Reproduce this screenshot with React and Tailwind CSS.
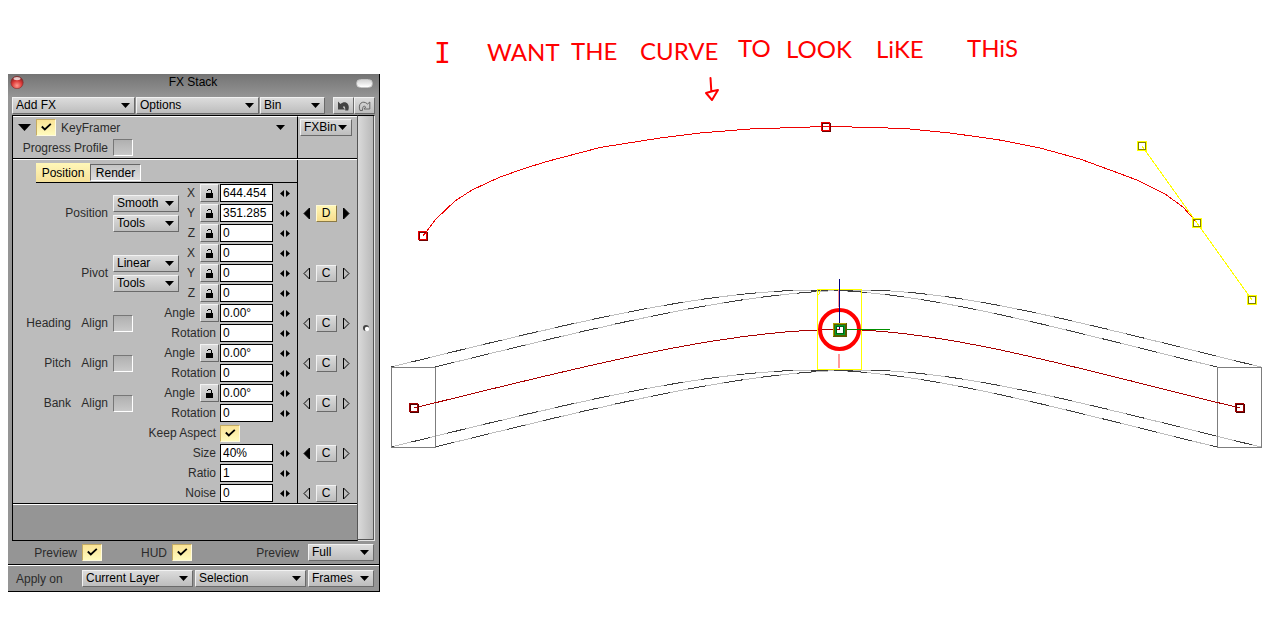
import React from "react";

const raised =
  "border border-t-[#f2f2f2] border-l-[#f2f2f2] border-r-[#6a6a6a] border-b-[#6a6a6a] bg-linear-to-b from-[#dcdcdc] to-[#bdbdbd]";

function Picker({ label, options, className = "" }) {
  return (
    <span className={`relative block h-[17px] ${className}`}>
      <select
        aria-label={label}
        className={`block h-full w-full appearance-none rounded-none ${raised} pl-[3px] text-[12px] leading-[15px] text-black outline-none`}
      >
        {options.map((o) => (
          <option key={o}>{o}</option>
        ))}
      </select>
      <svg
        className="pointer-events-none absolute top-[6px] right-[5px] h-[5px] w-[9px]"
        viewBox="0 0 9 5"
        aria-hidden="true"
      >
        <path d="M0 0h9L4.500 5z" fill="#000" />
      </svg>
    </span>
  );
}

function Tick({ id, checked = false }) {
  return (
    <span className="relative block h-[17px] w-[20px] shrink-0">
      <input
        id={id}
        type="checkbox"
        defaultChecked={checked}
        className="peer block h-full w-full appearance-none border border-t-[#777] border-l-[#777] border-r-white border-b-white bg-linear-to-b from-[#b0b0b0] to-[#c8c8c8] checked:border-t-[#c4ab62] checked:border-l-[#c4ab62] checked:border-r-[#fffbe0] checked:border-b-[#fffbe0] checked:from-[#fae395] checked:to-[#fffbbd]"
      />
      <svg
        className="pointer-events-none invisible absolute top-[4px] left-[5px] h-[8px] w-[11px] peer-checked:visible"
        viewBox="0 0 11 8"
        aria-hidden="true"
      >
        <path d="M0.800 3.500l3 3L9.800 0.800" fill="none" stroke="#000" strokeWidth="1.800" />
      </svg>
    </span>
  );
}

function Lock({ label }) {
  return (
    <button type="button" aria-label={`Lock ${label}`} className={`flex h-[18px] w-[19px] items-center justify-center ${raised}`}>
      <svg width="9" height="9" viewBox="0 0 9 9" shapeRendering="crispEdges" aria-hidden="true">
        <path d="M1 4h7v5H1z" fill="#000" />
        <path d="M2 1h1V0h3v1h1v3H6V1H3v1H2z" fill="#000" />
      </svg>
    </button>
  );
}

function Stepper({ label }) {
  return (
    <button type="button" aria-label={`Adjust ${label}`} className="ml-[7px] flex h-[18px] w-[10px] items-center">
      <svg width="10" height="7" viewBox="0 0 10 7" aria-hidden="true">
        <path d="M4 0v7L0 3.500zM6 0v7l4-3.500z" fill="#000" />
      </svg>
    </button>
  );
}

function Field({ group, label, value, lock }) {
  const name = `${group} ${label}`;
  const id = name.toLowerCase().replace(/ /g, "-");
  return (
    <div className="flex h-[20px] items-center justify-end pr-[7px]">
      <label htmlFor={id} className={lock ? "mr-[5px]" : "mr-[4px]"}>
        {label}
      </label>
      {lock && <Lock label={name} />}
      <input
        id={id}
        defaultValue={value}
        className={`h-[18px] w-[53px] border border-black bg-white pl-[2px] text-[12px] text-black outline-none ${lock ? "ml-px" : ""}`}
      />
      <Stepper label={name} />
    </div>
  );
}

function Nav({ dir, solid, label }) {
  return (
    <button type="button" aria-label={label} className="flex h-[14px] w-[8px] items-center">
      <svg width="8" height="13" viewBox="0 0 8 13" aria-hidden="true">
        <path
          d={dir === "left" ? "M6.500 1v11L1 6.500z" : "M1.500 1v11L7 6.500z"}
          fill={solid ? "#000" : "none"}
          stroke="#000"
        />
      </svg>
    </button>
  );
}

function Keys({ name, letter = "C", left, right, active }) {
  return (
    <div className="flex w-full items-center justify-center gap-[5px] pr-[3px]">
      <Nav dir="left" solid={left} label={`Previous ${name} key`} />
      <button
        type="button"
        className={
          active
            ? "h-[17px] w-[21px] border border-t-[#fffbd5] border-l-[#fffbd5] border-r-[#8b7a45] border-b-[#8b7a45] bg-linear-to-b from-[#fff6b4] to-[#f7dd8c] text-[12px] leading-[15px] text-black"
            : `h-[17px] w-[21px] ${raised} text-[12px] leading-[15px] text-black`
        }
      >
        {letter}
      </button>
      <Nav dir="right" solid={right} label={`Next ${name} key`} />
    </div>
  );
}

function Group({ left, children, keys }) {
  return (
    <div className="flex">
      <div className="flex flex-1 items-center">
        {left}
        <div className="flex-1">{children}</div>
      </div>
      <div className="flex w-[60px] items-center border-l border-black">{keys}</div>
    </div>
  );
}

function Interp({ name, mode }) {
  return (
    <div className="flex items-center">
      <span className="w-[95px] text-right">{name}</span>
      <div className="ml-[5px] flex flex-col gap-[3px]">
        <Picker label={`${name} interpolation`} options={[mode]} className="w-[66px]" />
        <Picker label={`${name} tools`} options={["Tools"]} className="w-[66px]" />
      </div>
    </div>
  );
}

function AlignBox({ name }) {
  const id = `align-${name.toLowerCase()}`;
  return (
    <div className="flex items-center">
      <span className="w-[58px] text-right">{name}</span>
      <label htmlFor={id} className="mr-[5px] w-[37px] text-right">
        Align
      </label>
      <Tick id={id} />
    </div>
  );
}

function Panel() {
  return (
    <section className="w-[372px] shrink-0 border-r border-b border-black bg-[#959595] text-[12px] leading-[16px] text-[#2b2b2b]">
      <header className="flex h-[23px] items-start justify-between bg-linear-to-b from-[#747474] to-[#959595] px-[2px]">
        <button type="button" aria-label="Close" className="mt-[1px]">
          <svg width="14" height="14" viewBox="0 0 14 14" aria-hidden="true">
            <defs>
              <radialGradient id="close" cx="50%" cy="75%" r="65%">
                <stop offset="0" stopColor="#ff9c90" />
                <stop offset="0.6" stopColor="#dc3a38" />
                <stop offset="1" stopColor="#8e2525" />
              </radialGradient>
            </defs>
            <circle cx="7" cy="7.500" r="6.200" fill="url(#close)" stroke="#7a3030" strokeWidth="0.600" />
            <ellipse cx="7" cy="3.600" rx="3.500" ry="1.700" fill="#fff" opacity="0.750" />
          </svg>
        </button>
        <h1 className="ml-[6px] text-[12px] text-black">FX Stack</h1>
        <button
          type="button"
          aria-label="Collapse"
          className="mt-[5px] mr-[4px] h-[9px] w-[17px] rounded-full border border-[#c4c4c4] bg-linear-to-b from-[#d4d4d4] to-white"
        />
      </header>

      <div className="flex gap-px px-[4px]">
        <Picker label="Add FX" options={["Add FX"]} className="w-[123px]" />
        <Picker label="Options" options={["Options"]} className="w-[123px]" />
        <Picker label="Bin" options={["Bin"]} className="w-[65px]" />
        <div className="ml-[7px] flex">
          <button type="button" aria-label="Undo" className={`flex h-[17px] w-[21px] items-center justify-center ${raised}`}>
            <svg width="13" height="10" viewBox="0 0 13 10" aria-hidden="true">
              <path d="M1 0.500v8h7L5.800 6C7 4.300 8.500 5 8.200 9.500h3C13.500 3 8.500 -1.500 3.400 3z" fill="#444" />
            </svg>
          </button>
          <button type="button" aria-label="Redo" className={`flex h-[17px] w-[21px] items-center justify-center ${raised}`}>
            <svg width="13" height="10" viewBox="0 0 13 10" aria-hidden="true">
              <path
                d="M11.800 1v7H6L7.700 6C6 4.300 4.500 5 4.500 9.500H2C-0.500 3 4.500 -1.500 9.600 3z"
                fill="none"
                stroke="#666"
              />
            </svg>
          </button>
        </div>
      </div>

      <div className="mx-[4px] mt-px flex">
        <div className="flex flex-1 flex-col border border-black border-r-[#555]">
          <div className="flex h-[43px] border-b border-black bg-[#bcbcbc]">
            <div className="flex-1 border-t border-white">
              <div className="flex items-center pt-[2px]">
                <button type="button" aria-label="Fold KeyFramer" className="ml-[5px] flex h-[17px] w-[13px] items-center">
                  <svg width="13" height="7" viewBox="0 0 13 7" aria-hidden="true">
                    <path d="M0 0h13L6.500 7z" fill="#000" />
                  </svg>
                </button>
                <span className="ml-[5px]">
                  <Tick id="keyframer" checked />
                </span>
                <label htmlFor="keyframer" className="ml-[5px] flex-1">
                  KeyFramer
                </label>
                <button type="button" aria-label="KeyFramer menu" className="mr-[12px] flex h-[17px] items-center">
                  <svg width="9" height="5" viewBox="0 0 9 5" aria-hidden="true">
                    <path d="M0 0h9L4.500 5z" fill="#000" />
                  </svg>
                </button>
              </div>
              <div className="mt-[3px] flex items-center">
                <label htmlFor="profile" className="w-[95px] text-right">
                  Progress Profile
                </label>
                <span className="ml-[5px]">
                  <Tick id="profile" />
                </span>
              </div>
            </div>
            <div className="w-[60px] border-t border-l border-t-white border-l-black pt-[2px] pl-[2px]">
              <Picker label="FXBin" options={["FXBin"]} className="w-[52px]" />
            </div>
          </div>

          <div className="border-t border-white bg-[#bcbcbc]">
            <Group keys={null}>
              <div className="pt-[3px] pl-[23px]">
                <div role="tablist" className="flex h-[20px] items-start border-b border-black">
                  <button
                    type="button"
                    role="tab"
                    aria-selected="true"
                    className="h-[19px] w-[54px] bg-linear-to-b from-[#fff7b8] to-[#f6e19a] text-black"
                  >
                    Position
                  </button>
                  <button
                    type="button"
                    role="tab"
                    aria-selected="false"
                    className="mt-px h-[17px] w-[51px] border border-t-[#666] border-l-[#666] border-r-white border-b-white bg-linear-to-b from-[#c4c4c4] to-[#dedede] leading-[17px] text-black"
                  >
                    Render
                  </button>
                </div>
              </div>
            </Group>
            <Group
              left={<Interp name="Position" mode="Smooth" />}
              keys={<Keys name="Position" letter="D" left right active />}
            >
              <Field group="Position" label="X" value="644.454" lock />
              <Field group="Position" label="Y" value="351.285" lock />
              <Field group="Position" label="Z" value="0" lock />
            </Group>
            <Group left={<Interp name="Pivot" mode="Linear" />} keys={<Keys name="Pivot" />}>
              <Field group="Pivot" label="X" value="0" lock />
              <Field group="Pivot" label="Y" value="0" lock />
              <Field group="Pivot" label="Z" value="0" lock />
            </Group>
            {["Heading", "Pitch", "Bank"].map((name) => (
              <Group key={name} left={<AlignBox name={name} />} keys={<Keys name={name} />}>
                <Field group={name} label="Angle" value="0.00°" lock />
                <Field group={name} label="Rotation" value="0" />
              </Group>
            ))}
            <Group keys={null}>
              <div className="flex h-[20px] items-center justify-end pr-[57px]">
                <label htmlFor="aspect" className="mr-[4px]">
                  Keep Aspect
                </label>
                <Tick id="aspect" checked />
              </div>
            </Group>
            <Group keys={<Keys name="Size" left />}>
              <Field group="Shape" label="Size" value="40%" />
            </Group>
            <Group keys={null}>
              <Field group="Shape" label="Ratio" value="1" />
            </Group>
            <Group keys={<Keys name="Noise" />}>
              <Field group="Shape" label="Noise" value="0" />
            </Group>
          </div>
          <div className="h-[37px] border-t border-black">
            <div className="border-t border-white" />
          </div>
        </div>
        <div className="w-[17px] border-t border-r border-b border-t-black border-r-[#e5e5e5] border-b-[#e5e5e5]">
          <div className="flex h-full items-center justify-center border-r border-b border-[#555] bg-linear-to-r from-[#dadada] to-[#b9b9b9]">
            <svg width="8" height="8" viewBox="0 0 8 8" aria-hidden="true">
              <circle cx="4" cy="4" r="3" fill="#444" />
              <circle cx="5" cy="5" r="2.200" fill="#fff" />
            </svg>
          </div>
        </div>
      </div>

      <div className="flex h-[24px] items-center border-b border-black pr-[5px]">
        <label htmlFor="preview" className="w-[69px] text-right">
          Preview
        </label>
        <span className="ml-[5px]">
          <Tick id="preview" checked />
        </span>
        <label htmlFor="hud" className="w-[65px] text-right">
          HUD
        </label>
        <span className="ml-[5px]">
          <Tick id="hud" checked />
        </span>
        <span className="flex-1 pr-[9px] text-right">Preview</span>
        <Picker label="Preview quality" options={["Full"]} className="w-[66px]" />
      </div>
      <div className="flex h-[26px] items-center border-t border-white pr-[5px]">
        <span className="flex-1 pl-[8px]">Apply on</span>
        <Picker label="Layer" options={["Current Layer"]} className="w-[111px]" />
        <Picker label="Range" options={["Selection"]} className="ml-[2px] w-[111px]" />
        <Picker label="Units" options={["Frames"]} className="ml-[2px] w-[66px]" />
      </div>
    </section>
  );
}

function Handle({ x, y, light, dark, inset }) {
  return (
    <g fill="none" shapeRendering="crispEdges">
      {inset ? (
        <rect x={x - 3.5} y={y - 3.5} width="7" height="7" stroke={dark} />
      ) : (
        <rect x={x - 3.5} y={y - 3.5} width="8" height="8" stroke={dark} />
      )}
      <rect x={x - 4.5} y={y - 4.5} width={inset ? 9 : 8} height={inset ? 9 : 8} stroke={light} />
    </g>
  );
}

const spine = "M414 408C570 370 720 329.500 839 329.500C950 329.500 1090 372 1240 408";
const rim = "M414 408C570 370 720 331 839 331C950 331 1090 372 1240 408";

const edges = [
  [-23, -41],
  [21, -41],
  [-23, 39],
  [21, 39],
];

const words = [
  { x: 487, y: 61, t: "WANT" },
  { x: 571, y: 60, t: "THE" },
  { x: 640, y: 60, t: "CURVE" },
  { x: 738, y: 57, t: "TO" },
  { x: 786, y: 58, t: "LOOK" },
  { x: 876, y: 58, t: "LiKE" },
  { x: 967, y: 57, t: "THiS" },
];

function Viewport() {
  return (
    <svg
      className="h-auto min-w-0 flex-1"
      viewBox="380 0 896 624"
      preserveAspectRatio="xMinYMin meet"
      role="img"
      aria-label="Motion path"
    >
      <g fill="#f00" className="font-['Lato',sans-serif] text-[24px]">
        <text x="434" y="63" className="font-['DejaVu_Sans_Mono',monospace] text-[28px]">
          I
        </text>
        {words.map((w) => (
          <text key={w.t} x={w.x} y={w.y}>
            {w.t}
          </text>
        ))}
      </g>
      <path
        d="M710.500 78l0.800 13M706 93l6 7 6-10-5 1-7 2"
        fill="none"
        stroke="#f00"
        strokeWidth="2"
        strokeLinecap="round"
        strokeLinejoin="round"
      />

      <g fill="none" shapeRendering="crispEdges">
        <path
          d="M423 236L436 219L455 201L472 190L500 177L523 169L545 162L600 147.500L660 138L700 133L750 129L826 126.500L877 127.500L910 129L950 133L997 139.500L1040 148L1080 159L1110 170L1137 180L1165 194L1183 207L1197 223"
          stroke="#e00"
        />
        {edges.map(([dx, dy], i) => (
          <g key={i} transform={`translate(${dx} ${dy})`}>
            <path d={rim} stroke="#bdbdbd" />
            <path d={rim} stroke="#3c3c3c" strokeDasharray="19 18" strokeDashoffset={i % 2 ? 0 : 16} />
          </g>
        ))}
        <path d="M391.500 367.500h44v80h-44zM1217.500 367.500h44v80h-44z" stroke="#7d7d7d" />
        <path d={spine} stroke="#a80000" />
        <path d="M839 290v17M839 354v14" stroke="#ff9c9c" strokeWidth="2" />
        <path d="M817.500 289.500h44v80h-44zM818.500 295l2-5" stroke="#ff0" />
        <path d="M1142 146L1252 300" stroke="#ff0" />
      </g>
      <circle cx="839.500" cy="329.500" r="19.500" fill="none" stroke="#f00" strokeWidth="4" />
      <g fill="none" shapeRendering="crispEdges">
        <path d="M839.500 279v47" stroke="#000080" />
        <path d="M844 329.500h46" stroke="#009000" />
        <path d="M833 323h14v14h-14z" fill="#5c5a00" />
        <path d="M833 323h13v13h-13z" fill="#aaa400" />
        <path d="M834 324h12v12h-12z" fill="#5c5a00" />
        <path d="M835 325h10v10h-10z" fill="#00a02a" />
        <path d="M836 326h8v8h-8z" fill="#006414" />
        <path d="M837 327h6v6h-6z" fill="#fff" />
        <path d="M837 329.500h3" stroke="#a80000" />
        <path d="M839.500 327v2" stroke="#000080" />
      </g>
      <Handle x={423} y={236} light="#f00000" dark="#700000" />
      <Handle x={826} y={127} light="#f00000" dark="#700000" />
      <Handle x={414} y={408} light="#a00000" dark="#500000" />
      <Handle x={1240} y={408} light="#a00000" dark="#500000" />
      <Handle x={1142} y={146} light="#ffff00" dark="#808000" inset />
      <Handle x={1197} y={223} light="#ffff00" dark="#808000" inset />
      <Handle x={1252} y={300} light="#ffff00" dark="#808000" inset />
    </svg>
  );
}

export default function App() {
  return (
    <main className="flex items-start bg-white pl-[8px] font-['Liberation_Sans',Arial,sans-serif]">
      <div className="pt-[74px]">
        <Panel />
      </div>
      <Viewport />
    </main>
  );
}
